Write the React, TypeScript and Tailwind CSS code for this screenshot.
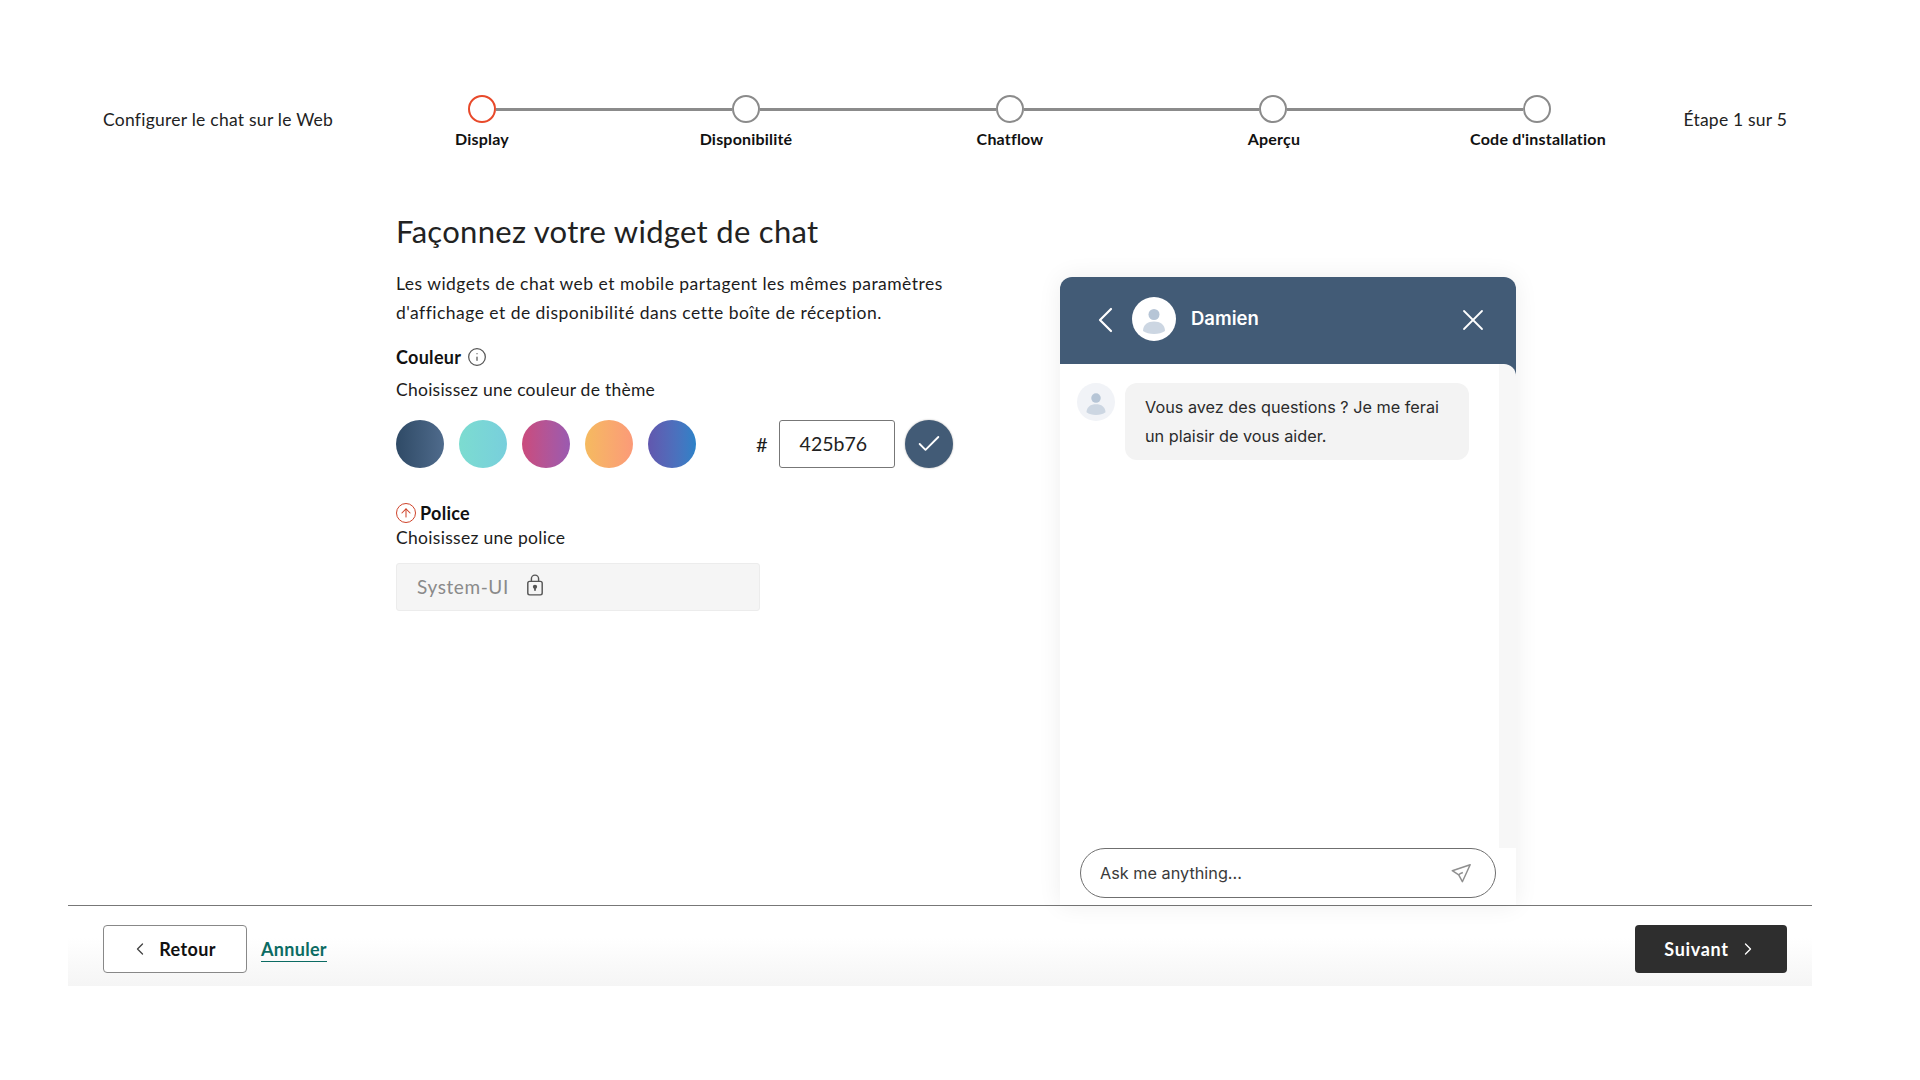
import { Check, ChevronLeft, ChevronRight, X, Info, ArrowUp } from 'lucide-react';

const steps = ['Display', 'Disponibilité', 'Chatflow', 'Aperçu', "Code d'installation"];

const swatches = [
  'bg-gradient-to-r from-[#2f4a66] to-[#4f6b8c]',
  'bg-gradient-to-r from-[#7cdcd0] to-[#78cfdc]',
  'bg-gradient-to-r from-[#cb4a7c] to-[#9a5ab0]',
  'bg-gradient-to-r from-[#f5ba5f] to-[#fb9a78]',
  'bg-gradient-to-r from-[#6157ae] to-[#2b82c8]',
];

function Person({ head, body }: { head: string; body: string }) {
  return (
    <svg viewBox="0 0 44 44" className="w-full h-full">
      <circle cx="22" cy="17.5" r="5.5" fill={head} />
      <path d="M11 34c0-6.5 5-9.5 11-9.5s11 3 11 9.5c-2.8 2-6.6 3-11 3s-8.2-1-11-3z" fill={body} />
    </svg>
  );
}

function Stepper() {
  return (
    <div className="w-[1320px]">
      <div className="flex items-center px-[118px]">
        {steps.map((s, i) => (
          <div key={s} className="flex items-center">
            <div className={`w-7 h-7 rounded-full border-[2.5px] bg-white ${i === 0 ? 'border-[#e8492a]' : 'border-[#8b8b8b]'}`} />
            {i < steps.length - 1 && <div className="w-[235.75px] h-[3px] bg-[#8b8b8b]" />}
          </div>
        ))}
      </div>
      <div className="grid grid-cols-5 mt-[6px]">
        {steps.map((s) => (
          <div key={s} className="text-center text-[16px] leading-[20px] font-bold text-[#111] tracking-[0.2px]">
            {s}
          </div>
        ))}
      </div>
    </div>
  );
}

function ChatPreview() {
  return (
    <div className="w-[456px] h-[628px] flex flex-col rounded-t-[12px] shadow-[0_0_24px_rgba(0,0,0,0.07)] bg-white font-['Inter',sans-serif]">
      <div className="h-[87px] shrink-0 bg-[#425b76] rounded-t-[12px] flex items-center pl-[37px] pr-[25px] pb-[4px] text-white">
        <svg viewBox="0 0 16 26" className="w-4 h-[26px] mt-[3px]" fill="none" stroke="currentColor" strokeWidth="2.2" strokeLinecap="round" strokeLinejoin="round">
          <path d="M14 2L3 13l11 11" />
        </svg>
        <div className="w-11 h-11 rounded-full bg-white ml-[19px] overflow-hidden">
          <Person head="#b6c5d6" body="#ccd6e2" />
        </div>
        <span className="ml-[15px] text-[18.5px] font-semibold">Damien</span>
        <X className="w-9 h-9 ml-auto mt-[3px]" strokeWidth={1.2} />
      </div>
      <div className="flex-1 flex min-h-0">
        <div className="flex-1 bg-white pt-[19px] pl-[17px] flex items-start">
          <div className="w-[38px] h-[38px] rounded-full bg-[#f1f3f7] overflow-hidden">
            <Person head="#b6c5d6" body="#ccd6e2" />
          </div>
          <div className="ml-[10px] w-[344px] h-[77px] bg-[#f3f3f3] rounded-[12px] pl-5 pt-[10px] text-[16.25px] leading-[29px] text-[#2b2b2b]">
            Vous avez des questions ? Je me ferai
            <br />
            un plaisir de vous aider.
          </div>
        </div>
        <div className="w-[17px] bg-[#425b76]">
          <div className="h-full bg-[#f7f7f7] rounded-tr-[12px]" />
        </div>
      </div>
      <div className="h-[57px] shrink-0 bg-white px-5">
        <div className="h-[50px] border border-[#6f6f6f] rounded-full flex items-center pl-[19px] pr-[23px] text-[16.25px] text-[#3a3a3a]">
          <span>Ask me anything...</span>
          <svg viewBox="0 0 24 24" className="w-[22px] h-[22px] ml-auto" fill="none" stroke="#8f8f8f" strokeWidth="1.6" strokeLinejoin="round">
            <path d="M22 3L2.5 9.5l7 4.5 4 7.5L22 3z" />
            <path d="M14 11.5c-2 .8-3.5 1.5-4.5 2.5" />
          </svg>
        </div>
      </div>
    </div>
  );
}

function LeftForm() {
  return (
    <div className="w-[664px] text-[#1c1c1c] font-['Lato',sans-serif]">
      <h1 className="text-[31px] leading-[40px] font-normal text-[#222] tracking-[0.3px]">Façonnez votre widget de chat</h1>
      <p className="mt-[18px] text-[17.5px] leading-[29px] tracking-[0.47px]">
        Les widgets de chat web et mobile partagent les mêmes paramètres
        <br />
        d'affichage et de disponibilité dans cette boîte de réception.
      </p>
      <div className="mt-[18px] flex items-center h-[24px]">
        <span className="text-[18px] font-bold text-[#111] tracking-[0.3px]">Couleur</span>
        <Info className="w-5 h-5 ml-[6px] text-[#555]" strokeWidth={1.5} />
      </div>
      <p className="mt-[9px] text-[17.5px] leading-[24px] tracking-[0.25px]">Choisissez une couleur de thème</p>
      <div className="mt-[18px] flex items-center">
        <div className="flex gap-[15px]">
          {swatches.map((c) => (
            <div key={c} className={`w-12 h-12 rounded-full ${c}`} />
          ))}
        </div>
        <span className="ml-[60px] text-[20px]">#</span>
        <div className="ml-[11px] w-[116px] h-12 border border-[#777] rounded-[3px] flex items-center pl-5 text-[19.5px] text-[#222]">
          425b76
        </div>
        <div className="ml-[10px] w-12 h-12 rounded-full bg-[#425b76] flex items-center justify-center shadow-[0_0_2px_rgba(0,0,0,0.35)]">
          <Check className="w-7 h-7 text-white" strokeWidth={1.6} />
        </div>
      </div>
      <div className="mt-[33px] flex items-center h-[24px]">
        <div className="w-5 h-5 rounded-full border-[1.5px] border-[#cf432a] flex items-center justify-center">
          <ArrowUp className="w-[14px] h-[14px] text-[#cf432a]" strokeWidth={1.8} />
        </div>
        <span className="ml-[4px] text-[18px] font-bold text-[#111] tracking-[0.3px]">Police</span>
      </div>
      <p className="mt-[1px] text-[17.5px] leading-[24px] tracking-[0.3px]">Choisissez une police</p>
      <div className="mt-[13px] w-[364px] h-12 rounded-[3px] bg-[#f5f5f5] border border-[#ececec] flex items-center pl-5 text-[#8a8a8a] text-[19px] tracking-[0.6px]">
        <span>System-UI</span>
        <svg viewBox="0 0 20 26" className="w-[18px] h-[24px] ml-[17px] mt-[-4px]" fill="none" stroke="#555" strokeWidth="1.6">
          <rect x="2" y="9" width="16" height="15" rx="2" />
          <path d="M6 9V6a4 4 0 018 0v3" />
          <circle cx="10" cy="15" r="1.6" fill="#555" />
          <path d="M10 15v4.5" strokeWidth="2" />
        </svg>
      </div>
    </div>
  );
}

export default function App() {
  return (
    <div className="w-[1920px] h-[1080px] bg-white overflow-hidden font-['Lato',sans-serif]">
      {/* Top bar */}
      <div className="pt-[95px] pl-[103px] pr-[133px] flex items-start h-[210px]">
        <div className="w-[247px] mt-[13px] text-[17.5px] leading-[24px] tracking-[0.25px] text-[#222]">Configurer le chat sur le Web</div>
        <Stepper />
        <div className="flex-1 mt-[13px] text-right text-[17.5px] leading-[24px] tracking-[0.2px] text-[#222]">Étape 1 sur 5</div>
      </div>

      {/* Body */}
      <div className="h-[695px] flex items-start pl-[396px]">
        <div className="pt-[1px]">
          <LeftForm />
        </div>
        <div className="mt-[67px]">
          <ChatPreview />
        </div>
      </div>

      {/* Footer */}
      <div className="ml-[68px] mr-[108px] h-[81px] border-t border-[#777] bg-gradient-to-b from-white from-40% to-[#f5f5f5] pl-[35px] pr-[25px] pt-[19px] flex items-start">
        <button className="w-[144px] h-12 border border-[#888] rounded-[4px] bg-white flex items-center justify-center text-[18px] font-bold text-[#111] tracking-[0.4px]">
          <ChevronLeft className="w-5 h-5 mr-[9px] ml-[-4px] text-[#444]" strokeWidth={1.6} />
          Retour
        </button>
        <a className="ml-[14px] mt-[12px] text-[18px] leading-[24px] font-bold text-[#0b6b63] border-b border-[#0b6b63] tracking-[0.3px]">Annuler</a>
        <button className="ml-auto w-[152px] h-12 rounded-[4px] bg-[#2e2e2e] flex items-center justify-center text-[18px] font-bold text-white tracking-[0.7px]">
          Suivant
          <ChevronRight className="w-5 h-5 ml-[9px]" strokeWidth={1.6} />
        </button>
      </div>
    </div>
  );
}
